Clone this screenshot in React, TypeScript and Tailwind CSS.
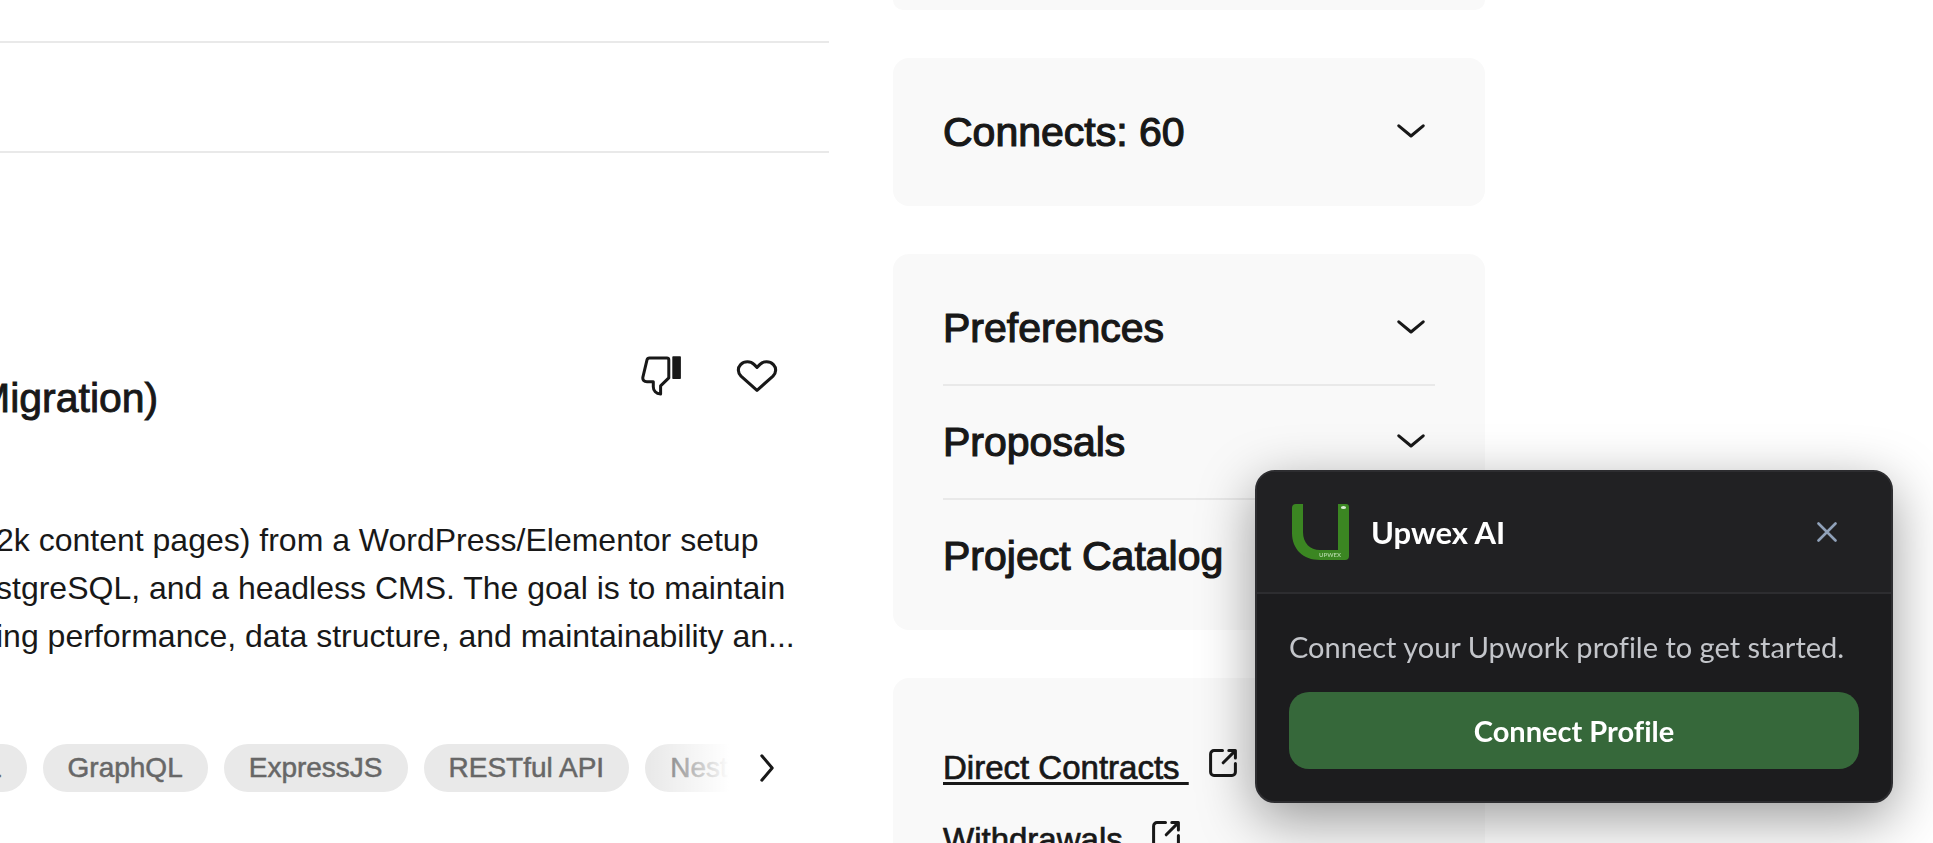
import { useState } from "react";

const skills = ["PostgreSQL", "GraphQL", "ExpressJS", "RESTful API", "NestJS"];

const description = [
  "2k content pages) from a WordPress/Elementor setup",
  "stgreSQL, and a headless CMS. The goal is to maintain",
  "ing performance, data structure, and maintainability an...",
];

function ChevronDown() {
  return (
    <svg width="28" height="14" viewBox="0 0 28 14" fill="none" stroke="currentColor" strokeWidth="3" strokeLinecap="round" strokeLinejoin="round" aria-hidden="true">
      <path d="M1.8 1.8 14 12 26.2 1.8" />
    </svg>
  );
}

function ExternalIcon() {
  return (
    <svg width="28" height="28" viewBox="0 0 28 28" fill="none" stroke="currentColor" strokeWidth="3" strokeLinecap="round" strokeLinejoin="round" aria-hidden="true">
      <path d="M13.5 1.6H5A3.4 3.4 0 0 0 1.6 5v18A3.4 3.4 0 0 0 5 26.4h18a3.4 3.4 0 0 0 3.4-3.4v-8.5" />
      <path d="M14.2 13.8 25.6 2.4M19.8 1.6h6.6V9" />
    </svg>
  );
}

function ThumbDownIcon() {
  return (
    <svg width="40" height="40" viewBox="0 0 40 40" fill="none" stroke="currentColor" strokeWidth="3" strokeLinejoin="round" aria-hidden="true">
      <path d="M8.5 1.9H26a1.8 1.8 0 0 1 1.8 1.8v18.2l-8.2 8v8.2c-4.6-.4-7.3-3.4-7.3-7.3v-5.1H6c-3 0-4.6-1.7-4.1-4.6L6 3.9c.3-1.3 1.2-2 2.5-2Z" />
      <rect x="31.3" y="0.3" width="8.6" height="22.8" rx="0.8" fill="currentColor" stroke="none" />
    </svg>
  );
}

function HeartIcon() {
  return (
    <svg width="42" height="44" viewBox="0 0 42 44" fill="none" stroke="currentColor" strokeWidth="3.1" strokeLinejoin="round" aria-hidden="true">
      <path d="M21 36.3 5 22.2c-3.4-3.4-3.5-8.4-.4-11.6 3.7-3.8 10-3.7 13.4-.2l3 3 3-3c3.4-3.5 9.7-3.6 13.4.2 3.1 3.2 3 8.2-.4 11.6Z" />
    </svg>
  );
}

function UpwexLogo() {
  return (
    <svg width="62" height="62" viewBox="0 0 62 62" aria-hidden="true">
      <path d="M7 3h7v28c0 11 7 18 17 18h18V3h8a3 3 0 0 1 3 3v49a4 4 0 0 1-4 4H31C14 59 3 48 3 32V7a4 4 0 0 1 4-4Z" fill="#3b8622" />
      <ellipse cx="54.5" cy="6.5" rx="2.6" ry="1.5" fill="#d9ead4" />
      <text x="30" y="55.5" fontSize="6" fontWeight="700" fontFamily="Lato, sans-serif" fill="#a9d19c">UPWEX</text>
    </svg>
  );
}

function AccordionRow({ title }: { title: string }) {
  const [open, setOpen] = useState(false);
  return (
    <div className="flex h-[52px] items-center justify-between">
      <h2 className="text-[41px] leading-[52px] whitespace-nowrap [-webkit-text-stroke:1.2px]">{title}</h2>
      <button type="button" aria-label={title} aria-expanded={open} onClick={() => setOpen(!open)} className="flex size-12 items-center justify-center pb-0.5">
        <ChevronDown />
      </button>
    </div>
  );
}

function ExternalLink({ label, underlined }: { label: string; underlined?: boolean }) {
  return (
    <a href="#" className="flex h-12 items-center gap-5 text-[33px] leading-[48px] whitespace-pre [-webkit-text-stroke:0.7px]">
      <span className={underlined ? "underline decoration-[3px] underline-offset-[3px]" : ""}>{label + " "}</span>
      <span className="pb-2.5">
        <ExternalIcon />
      </span>
    </a>
  );
}

function ConnectPopup({ onClose }: { onClose: () => void }) {
  return (
    <div
      role="dialog"
      aria-label="Upwex AI"
      className="fixed right-10 bottom-10 w-[638px] overflow-hidden rounded-[20px] border-2 border-[#2d2d30] bg-[#1c1c1e] shadow-[0_16px_56px_rgba(0,0,0,0.4)] font-[Lato,sans-serif] [font-variant-ligatures:none]"
    >
      <div className="flex h-[122px] items-center gap-5 border-b-2 border-[#2d2d30] bg-[#212123] px-8">
        <UpwexLogo />
        <h2 className="flex-1 text-[31px] leading-[42px] font-bold text-white">Upwex AI</h2>
        <button type="button" aria-label="Close" onClick={onClose} className="flex size-16 items-center justify-center text-slate-400">
          <svg width="20" height="20" viewBox="0 0 20 20" fill="none" stroke="currentColor" strokeWidth="2.6" strokeLinecap="round" aria-hidden="true">
            <path d="m1.5 1.5 17 17m0-17-17 17" />
          </svg>
        </button>
      </div>
      <div className="flex flex-col gap-6 p-8">
        <p className="text-[29px] leading-[42px] whitespace-nowrap text-[#c3c5ca]">Connect your Upwork profile to get started.</p>
        <button type="button" className="h-[77px] rounded-[20px] bg-[#36683a] text-[29px] font-bold text-white">
          Connect Profile
        </button>
      </div>
    </div>
  );
}

export default function App() {
  const [showPopup, setShowPopup] = useState(true);

  return (
    <div className="grid h-screen grid-cols-[829fr_592fr_384fr] gap-16 overflow-hidden bg-white font-['Liberation_Sans',Arial,sans-serif] text-[#181818]">
      {/* Job feed */}
      <main className="min-w-0">
        <div className="h-[43px] border-b-2 border-[#e9e9e9]" />
        <div className="h-[110px] border-b-2 border-[#e9e9e9]" />
        <article className="pt-[191px] pr-10">
          <div className="flex items-start justify-between">
            <h3 className="mt-[26px] -ml-6 text-[41px] leading-[56px] whitespace-nowrap [-webkit-text-stroke:0.9px]">Migration)</h3>
            <div className="flex gap-8">
              <button type="button" aria-label="Not interested" className="flex size-16 items-center justify-center">
                <ThumbDownIcon />
              </button>
              <button type="button" aria-label="Save job" className="flex size-16 items-center justify-center">
                <HeartIcon />
              </button>
            </div>
          </div>
          <p className="mt-[90px] -ml-1 text-[32px] leading-[48px] whitespace-nowrap">
            {description.map((line) => (
              <span key={line} className="block">{line}</span>
            ))}
          </p>
          <div className="mt-21 flex items-center gap-4">
            <div className="relative min-w-0 flex-1 overflow-hidden">
              <ul className="-ml-44 flex gap-4">
                {skills.map((skill) => (
                  <li key={skill} className="h-12 shrink-0 rounded-full bg-[#e9e9e9] px-[25px] text-[28px] leading-[48px] whitespace-nowrap text-[#676767] [-webkit-text-stroke:0.5px]">
                    {skill}
                  </li>
                ))}
              </ul>
              <div className="absolute inset-y-0 right-0 w-20 bg-linear-to-r from-transparent to-white" />
            </div>
            <button type="button" aria-label="Next skills" className="flex h-12 w-11 items-center justify-center">
              <svg width="14" height="28" viewBox="0 0 14 28" fill="none" stroke="currentColor" strokeWidth="3" strokeLinecap="round" strokeLinejoin="round" aria-hidden="true">
                <path d="M1.8 1.8 12.2 14 1.8 26.2" />
              </svg>
            </button>
          </div>
        </article>
      </main>

      {/* Sidebar */}
      <aside className="flex min-w-0 flex-col gap-12">
        <div className="h-[10px] shrink-0 rounded-b-2xl bg-[#f9f9f9]" />
        <section className="shrink-0 rounded-2xl bg-[#f9f9f9] px-[50px] py-12">
          <AccordionRow title="Connects: 60" />
        </section>
        <section className="flex shrink-0 flex-col gap-[30px] rounded-2xl bg-[#f9f9f9] px-[50px] py-12">
          <AccordionRow title="Preferences" />
          <hr className="border-t-2 border-[#e9e9e9]" />
          <AccordionRow title="Proposals" />
          <hr className="border-t-2 border-[#e9e9e9]" />
          <AccordionRow title="Project Catalog" />
        </section>
        <section className="flex shrink-0 flex-col items-start gap-6 rounded-2xl bg-[#f9f9f9] px-[50px] py-[66px]">
          <ExternalLink label="Direct Contracts" underlined />
          <ExternalLink label="Withdrawals" />
        </section>
      </aside>

      {showPopup && <ConnectPopup onClose={() => setShowPopup(false)} />}
    </div>
  );
}
